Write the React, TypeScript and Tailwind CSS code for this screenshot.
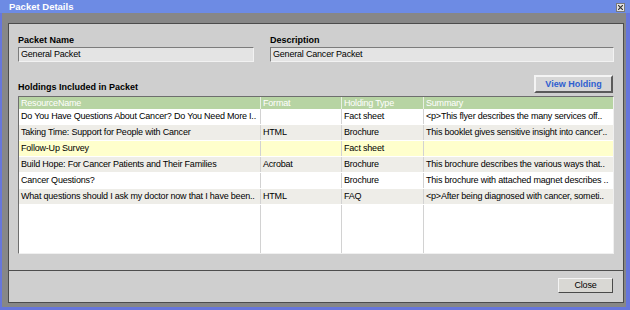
import React from 'react';

type Row = {
  name: string;
  format: string;
  type: string;
  summary: string;
  tone: 'white' | 'gray' | 'yellow';
};

const rows: Row[] = [
  { name: 'Do You Have Questions About Cancer? Do You Need More I..', format: '', type: 'Fact sheet', summary: '<p>This flyer describes the many services off..', tone: 'white' },
  { name: 'Taking Time: Support for People with Cancer', format: 'HTML', type: 'Brochure', summary: "This booklet gives sensitive insight into cancer'..", tone: 'gray' },
  { name: 'Follow-Up Survey', format: '', type: 'Fact sheet', summary: '', tone: 'yellow' },
  { name: 'Build Hope: For Cancer Patients and Their Families', format: 'Acrobat', type: 'Brochure', summary: 'This brochure describes the various ways that..', tone: 'gray' },
  { name: 'Cancer Questions?', format: '', type: 'Brochure', summary: 'This brochure with attached magnet describes ..', tone: 'white' },
  { name: 'What questions should I ask my doctor now that I have been..', format: 'HTML', type: 'FAQ', summary: '<p>After being diagnosed with cancer, someti..', tone: 'gray' },
];

const toneBg = {
  white: 'bg-white',
  gray: 'bg-[#eeede8]',
  yellow: 'bg-[#ffffcc]',
};

const cols = 'grid grid-cols-[242px_81px_82px_1fr]';
const cell = 'overflow-hidden whitespace-nowrap pl-[2px] border-r border-[#d2d2d2] last:border-r-0';

const App: React.FC = () => {
  return (
    <div className="flex h-[310px] w-[630px] flex-col bg-[#6676dc] font-['Liberation_Sans',Arial,sans-serif] text-black">
      {/* title bar */}
      <div className="flex h-[13px] items-start justify-between bg-[#6d8be4] pl-[9px] pr-[5px]">
        <span className="text-[9.5px] font-bold leading-[13px] text-white">Packet Details</span>
        <div className="mt-[3px] flex h-[9px] w-[9px] items-center justify-center border border-[#7a7a7a] bg-[#e4e4e4]">
          <svg width="5" height="5" viewBox="0 0 5 5">
            <path d="M0 0L5 5M5 0L0 5" stroke="#333" strokeWidth="1.2" />
          </svg>
        </div>
      </div>

      {/* window body */}
      <div className="mb-[3px] ml-[2px] mr-[4px] flex flex-1 bg-[#878787] pb-[4px] pl-[6px] pr-[2px] pt-[10px]">
        <div className="flex flex-1 flex-col border border-[#4c4c4c] bg-[#cfcfcf]">
          <div className="flex flex-1 flex-col px-[9px] pt-[11px]">
            {/* name / description */}
            <div className="grid grid-cols-[236px_1fr] gap-x-[16px]">
              <div>
                <div className="text-[9px] font-bold leading-[11px]">Packet Name</div>
                <div className="mt-[1px] h-[15px] border border-[#7c7c7c] border-b-[#f2f2f2] border-r-[#f2f2f2] bg-[#e4e4e4] pl-[2px] text-[9px] leading-[13px] tracking-[-0.2px]">
                  General Packet
                </div>
              </div>
              <div>
                <div className="text-[9px] font-bold leading-[11px]">Description</div>
                <div className="mt-[1px] h-[15px] border border-[#7c7c7c] border-b-[#f2f2f2] border-r-[#f2f2f2] bg-[#e4e4e4] pl-[2px] text-[9px] leading-[13px] tracking-[-0.2px]">
                  General Cancer Packet
                </div>
              </div>
            </div>

            {/* holdings header */}
            <div className="mt-[13px] flex items-end justify-between">
              <span className="text-[9px] font-bold leading-[11px]">Holdings Included in Packet</span>
              <button className="mr-[1px] h-[18px] w-[79px] border-2 border-[#f4f4f4] border-b-[#5a5a5a] border-r-[#5a5a5a] bg-[#d6d6d6] text-[9px] font-bold leading-[14px] text-[#2f5fd0]">
                View Holding
              </button>
            </div>

            {/* holdings table */}
            <div className="mt-[3px] flex h-[158px] flex-col border border-[#6e6e6e] border-b-[#f0f0f0] border-r-[#f0f0f0] bg-white text-[9px] tracking-[-0.2px]">
              <div className={`${cols} h-[12px] bg-[#b7d4a3] leading-[12px] text-white`}>
                <div className="overflow-hidden whitespace-nowrap border-r border-[#e8f0e2] pl-[2px]">ResourceName</div>
                <div className="overflow-hidden whitespace-nowrap border-r border-[#e8f0e2] pl-[2px]">Format</div>
                <div className="overflow-hidden whitespace-nowrap border-r border-[#e8f0e2] pl-[2px]">Holding Type</div>
                <div className="overflow-hidden whitespace-nowrap pl-[2px]">Summary</div>
              </div>
              {rows.map((r, i) => (
                <div key={i} className={`${cols} h-[16px] border-b border-white leading-[15px] ${toneBg[r.tone]}`}>
                  <div className={cell}>{r.name}</div>
                  <div className={cell}>{r.format}</div>
                  <div className={cell}>{r.type}</div>
                  <div className={cell}>{r.summary}</div>
                </div>
              ))}
              <div className={`${cols} flex-1`}>
                <div className="border-r border-[#d2d2d2]" />
                <div className="border-r border-[#d2d2d2]" />
                <div className="border-r border-[#d2d2d2]" />
                <div />
              </div>
            </div>
          </div>

          {/* footer */}
          <div className="flex h-[32px] items-start justify-end border-t border-[#4e4e4e] pr-[10px] pt-[7px]">
            <button className="h-[15px] w-[55px] border border-[#f4f4f4] border-b-[#4a4a4a] border-r-[#4a4a4a] bg-[#d9d8d4] text-[9px] leading-[13px] tracking-[-0.2px]">
              Close
            </button>
          </div>
        </div>
      </div>
    </div>
  );
};

export default App;
